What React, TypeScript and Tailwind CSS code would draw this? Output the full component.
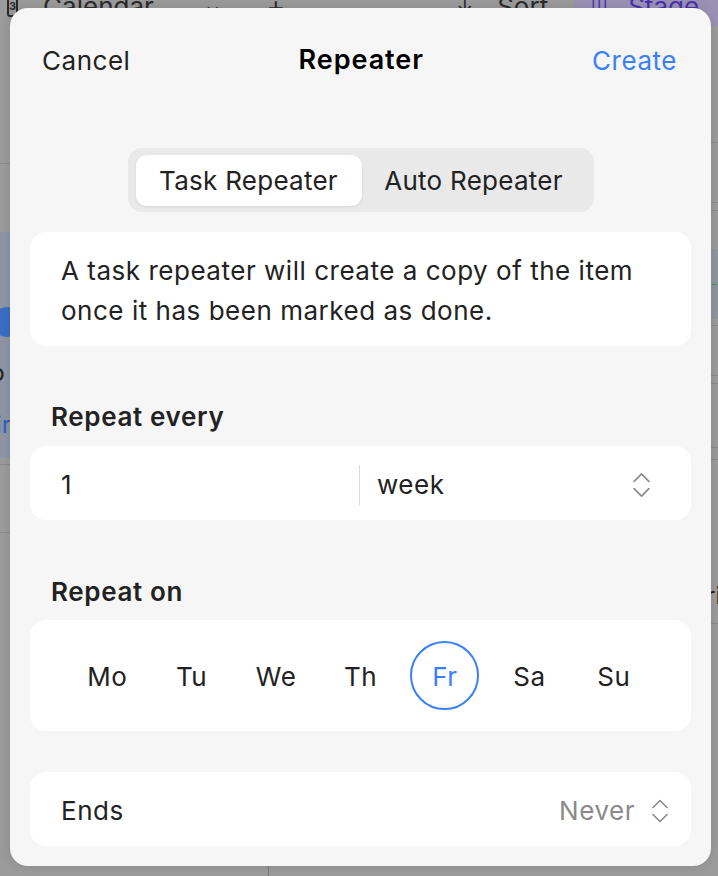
import React from 'react';

const days = ['Mo', 'Tu', 'We', 'Th', 'Fr', 'Sa', 'Su'];

function UpDown({ className }: { className?: string }) {
  return (
    <svg className={className} viewBox="0 0 18 28" fill="none" stroke="#8a8a8a" strokeWidth="1.6">
      <path d="M2 10.5 L9 3.5 L16 10.5" strokeLinecap="round" strokeLinejoin="round" />
      <path d="M2 17.5 L9 24.5 L16 17.5" strokeLinecap="round" strokeLinejoin="round" />
    </svg>
  );
}

function Backdrop() {
  // dimmed app behind the sheet
  return (
    <div className="absolute inset-0 bg-[#9b9b9b]">
      <div className="-mt-[12px] flex h-[36px] items-center text-[26px] text-[#2a2a2a]">
        <span className="ml-[7px] flex h-[22px] w-[14px] items-center justify-center rounded-[3px] border-2 border-[#2a2a2a] text-[11px] font-bold">
          3
        </span>
        <span className="ml-[25px]">Calendar</span>
        <span className="ml-[52px] text-[18px]">⌄</span>
        <span className="ml-[46px] text-[30px] font-light">+</span>
        <span className="ml-[171px] text-[20px]">↓</span>
        <span className="ml-[24px]">Sort</span>
        <span className="ml-[26px] flex h-[40px] items-center rounded-l-[10px] bg-[#9a92b6] pl-[16px] pr-[20px] text-[#4b2fb0]">
          <span className="mr-[20px] text-[18px]">|||</span>Stage
        </span>
      </div>
      <div className="flex">
        <div className="flex w-[10px] flex-col">
          <div className="mt-[139px] h-px bg-[#8a8a8a]" />
          <div className="mt-[68px] flex h-[226px] flex-col bg-[#8e96a6] text-[24px] leading-[30px] text-[#222]">
            <span className="-ml-[14px] mt-[31px]">o</span>
            <span className="-ml-[8px] mt-[14px] h-[30px] w-[30px] shrink-0 rounded-full bg-[#3a6ec4]" />
            <span className="-ml-[10px] mt-[21px]">b</span>
            <span className="-ml-[4px] mt-[22px] text-[#2f5fc0]">ir</span>
          </div>
          <div className="mt-[6px] h-px bg-[#8a8a8a]" />
          <div className="mt-[67px] h-px bg-[#8a8a8a]" />
        </div>
        <div className="flex-1" />
        <div className="flex w-[8px] flex-col">
          <div className="mt-[118px] h-px bg-[#8a8a8a]" />
          <div className="mt-[59px] h-px bg-[#8a8a8a]" />
          <div className="mt-[7px] h-px bg-[#8a8a8a]" />
          <div className="mt-[38px] flex h-[70px] items-center bg-[#9096a0]">
            <span className="ml-[2px] h-px w-[5px] bg-[#3a9a3a]" />
          </div>
          <div className="mt-[6px] h-px bg-[#8a8a8a]" />
          <div className="mt-[49px] h-px bg-[#8a8a8a]" />
          <div className="mt-[7px] h-px bg-[#8a8a8a]" />
          <div className="mt-[63px] h-px bg-[#8a8a8a]" />
          <div className="mt-[11px] h-px bg-[#8a8a8a]" />
          <div className="-ml-[4px] mt-[122px] text-[24px] leading-[28px] text-[#222]">ri</div>
          <div className="mt-[13px] h-px bg-[#8a8a8a]" />
        </div>
      </div>
      <div className="absolute left-[268px] top-[866px] h-[10px] w-px bg-[#7a7a7a]" />
    </div>
  );
}

export default function App() {
  return (
    <div
      className="relative h-[876px] w-[718px] overflow-hidden"
      style={{ fontFamily: 'Inter, "Noto Sans", sans-serif' }}
    >
      <Backdrop />
      <div className="absolute left-[10px] top-[8px] flex h-[858px] w-[701px] flex-col rounded-[18px] bg-[#f6f6f6] px-[20px] shadow-[0_0_12px_rgba(0,0,0,0.12)]">
        <header className="-mx-[20px] flex h-[104px] items-center justify-between pl-[32px] pr-[34px] text-[26px] tracking-[0.02em]">
          <button className="text-[#222]">Cancel</button>
          <h1 className="text-[27px] font-semibold tracking-[0.035em] text-black">Repeater</h1>
          <button className="text-[#3a7ff6]">Create</button>
        </header>

        <div className="mx-auto mt-[36px] flex h-[64px] w-[466px] items-center rounded-[14px] bg-[#e9e9e9] px-[8px] text-[26px] tracking-[0.01em] text-[#222]">
          <div className="flex h-[51px] w-[226px] items-center justify-center rounded-[11px] bg-white shadow-[0_1px_3px_rgba(0,0,0,0.08)]">
            Task Repeater
          </div>
          <div className="flex flex-1 items-center justify-center">Auto Repeater</div>
        </div>

        <div className="mt-[20px] flex h-[114px] flex-col justify-center rounded-[16px] bg-white px-[31px] pt-[3px] text-[26px] leading-[40px] tracking-[0.02em] text-[#222]">
          <p>A task repeater will create a copy of the item</p>
          <p>once it has been marked as done.</p>
        </div>

        <h2 className="mt-[55px] h-[32px] pl-[21px] text-[26px] leading-[32px] font-semibold tracking-[0.025em] text-[#222]">
          Repeat every
        </h2>
        <div className="mt-[13px] flex h-[74px] items-center rounded-[16px] bg-white pt-[3px] text-[26px] tracking-[0.02em] text-[#222]">
          <span className="w-[329px] pl-[31px]">1</span>
          <span className="h-[40px] w-px bg-[#dcdcdc]" />
          <span className="flex-1 pl-[17px]">week</span>
          <UpDown className="mr-[40px] h-[30px] w-[19px]" />
        </div>

        <h2 className="mt-[56px] h-[32px] pl-[21px] text-[26px] leading-[32px] font-semibold tracking-[0.025em] text-[#222]">
          Repeat on
        </h2>
        <div className="mt-[12px] grid h-[111px] grid-cols-7 items-center rounded-[16px] bg-white px-[35px] text-[26px] tracking-[0.02em] text-[#222]">
          {days.map((d) => (
            <div key={d} className="flex justify-center">
              {d === 'Fr' ? (
                <span className="flex h-[69px] w-[69px] items-center justify-center rounded-full border-2 border-[#3a7ff6] pt-[2px] text-[#3a7ff6]">
                  {d}
                </span>
              ) : (
                <span className="pt-[2px]">{d}</span>
              )}
            </div>
          ))}
        </div>

        <div className="mt-[41px] flex h-[74px] items-center rounded-[16px] bg-white pl-[31px] pr-[22px] pt-[3px] text-[26px] tracking-[0.02em]">
          <span className="flex-1 text-[#222]">Ends</span>
          <span className="text-[#8a8a8a]">Never</span>
          <UpDown className="ml-[16px] h-[28px] w-[18px]" />
        </div>
      </div>
    </div>
  );
}
